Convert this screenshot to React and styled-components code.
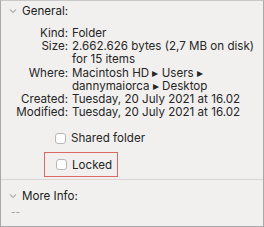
import React from 'react';
import styled, { createGlobalStyle } from 'styled-components';

const GlobalStyle = createGlobalStyle`
  html, body {
    margin: 0;
    padding: 0;
    background: #f1f0ef;
  }
  body {
    font-family: Inter, "Noto Sans", sans-serif;
    color: #262626;
  }
`;

const Chevron = () => (
  <svg width="8" height="6" viewBox="0 0 8 6">
    <path d="M1 1.5 L4 4.5 L7 1.5" fill="none" stroke="#b0b0b0" strokeWidth="1.1" />
  </svg>
);

const App = () => {
  const rows = [
    ['Kind:', 'Folder'],
    ['Size:', '2.662.626 bytes (2,7 MB on disk)'],
    ['', 'for 15 items'],
    ['Where:', 'Macintosh HD ▸ Users ▸'],
    ['', 'dannymaiorca ▸ Desktop'],
    ['Created:', 'Tuesday, 20 July 2021 at 16.02'],
    ['Modified:', 'Tuesday, 20 July 2021 at 16.02'],
  ];

  return (
    <>
      <GlobalStyle />
      <Panel>
        <Header>
          <Chevron />
          <span>General:</span>
        </Header>
        <InfoGrid>
          {rows.map(([label, value], i) => (
            <React.Fragment key={i}>
              <Label>{label}</Label>
              <Value>{value}</Value>
            </React.Fragment>
          ))}
        </InfoGrid>
        <Options>
          <CheckRow>
            <Box />
            <span>Shared folder</span>
          </CheckRow>
          <Highlight>
            <CheckRow>
              <Box />
              <span>Locked</span>
            </CheckRow>
          </Highlight>
        </Options>
        <Divider />
        <Header $top={9}>
          <Chevron />
          <span>More Info:</span>
        </Header>
        <Dashes>--</Dashes>
      </Panel>
    </>
  );
};

const Panel = styled.div`
  box-sizing: border-box;
  width: 264px;
  height: 227px;
  border: 1px solid #a8a8a8;
  border-top-color: #c8c8c8;
  background: #f1f0ef;
  font-size: 11.6px;
  overflow: hidden;
`;

const Header = styled.div`
  display: flex;
  align-items: center;
  gap: 5px;
  padding: ${(p) => p.$top ?? 3}px 0 0 8px;
  height: 14px;
  line-height: 14px;
  color: #222;
`;

const InfoGrid = styled.div`
  display: grid;
  grid-template-columns: 67px 1fr;
  column-gap: 4px;
  grid-auto-rows: 13.2px;
  margin-top: 9px;
  line-height: 13.2px;
`;

const Label = styled.div`
  text-align: right;
  white-space: nowrap;
`;

const Value = styled.div`
  white-space: nowrap;
`;

const Options = styled.div`
  display: flex;
  flex-direction: column;
  align-items: flex-start;
  margin-top: 12px;
  padding-left: 43px;
`;

const CheckRow = styled.div`
  display: flex;
  align-items: center;
  gap: 5px;
  height: 14px;
  padding-left: 11px;
`;

const Highlight = styled.div`
  box-sizing: border-box;
  margin-top: 7px;
  width: 74px;
  height: 25px;
  border: 1px solid #d86a63;
  display: flex;
  align-items: center;
`;

const Box = styled.span`
  box-sizing: border-box;
  width: 11px;
  height: 11px;
  border: 1px solid #b7b7b7;
  border-radius: 3px;
  background: #fff;
`;

const Divider = styled.div`
  height: 1px;
  margin-top: 2px;
  background: #d7d6d5;
`;

const Dashes = styled.div`
  padding: 3px 0 0 10px;
  color: #9a9a9a;
  font-size: 10px;
`;

export default App;
